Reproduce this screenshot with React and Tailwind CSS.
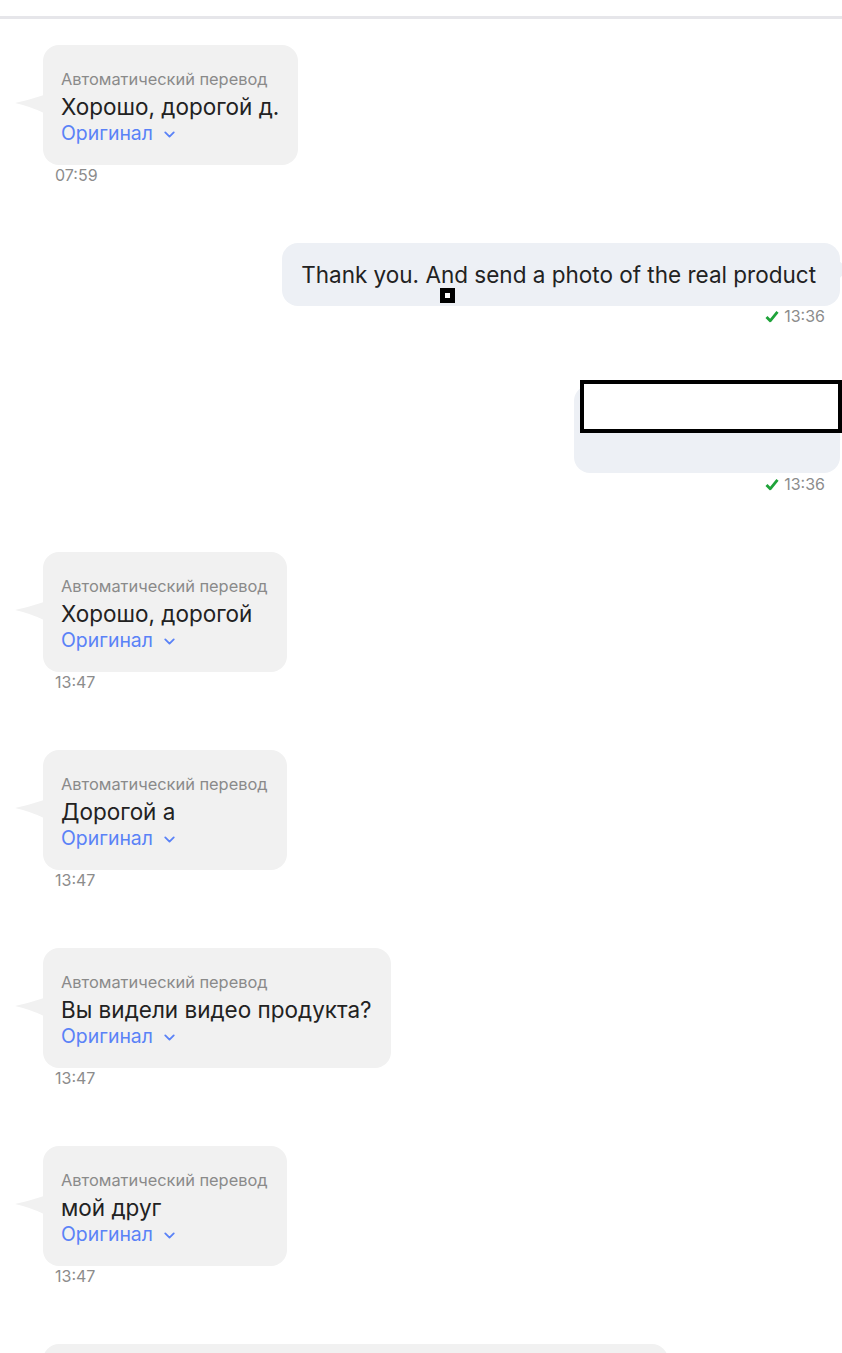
import React from 'react';
import { ChevronDown } from 'lucide-react';

const incoming = [
  { text: 'Хорошо, дорогой д.', time: '07:59' },
];

const laterIncoming = [
  { text: 'Хорошо, дорогой', time: '13:47' },
  { text: 'Дорогой а', time: '13:47' },
  { text: 'Вы видели видео продукта?', time: '13:47' },
  { text: 'мой друг', time: '13:47' },
];

function LeftTail() {
  return (
    <svg className="absolute left-[-28px] top-[50px]" width="29" height="18" viewBox="0 0 29 18">
      <path d="M0 8 Q14 5 29 0 L29 18 Q14 11 0 8 Z" fill="#f1f1f1" />
    </svg>
  );
}

function RightTail() {
  return (
    <svg className="absolute right-[-10px] top-[18px]" width="11" height="18" viewBox="0 0 11 18">
      <path d="M0 0 Q6 5 11 8 Q6 11 0 18 Z" fill="#edf0f5" />
    </svg>
  );
}

function Check() {
  return (
    <svg width="14" height="13" viewBox="0 0 14 13">
      <path d="M1.5 7 L5.2 10.8 L12.5 1.8" fill="none" stroke="#1fa33a" strokeWidth="2.8" strokeLinejoin="round" />
    </svg>
  );
}

function Incoming({ text, time }) {
  return (
    <div className="flex flex-col items-start mb-[58px]">
      <div className="relative ml-[43px] h-[120px] rounded-[16px] bg-[#f1f1f1] pl-[18px] pr-[19px] pt-[24px]">
        <LeftTail />
        <div className="text-[16.4px] leading-[20px] text-[#8a8a8a] whitespace-nowrap">Автоматический перевод</div>
        <div className="mt-1 text-[22.5px] leading-[28px] text-[#222222] whitespace-nowrap">{text}</div>
        <div className="flex items-center gap-[8px] text-[19.4px] leading-[24px] text-[#5a82f7]">
          <span>Оригинал</span>
          <ChevronDown size={17} strokeWidth={2.6} className="mt-[3px]" />
        </div>
      </div>
      <div className="ml-[55px] text-[16px] leading-[20px] text-[#8c8c8c]">{time}</div>
    </div>
  );
}

function OutTime({ time }) {
  return (
    <div className="flex items-center justify-end gap-[5px] pr-[17px] text-[16px] leading-[20px] text-[#8c8c8c]">
      <Check />
      <span>{time}</span>
    </div>
  );
}

export default function App() {
  return (
    <div className="h-[1353px] w-[842px] overflow-hidden bg-white font-['Inter','Liberation_Sans',sans-serif]">
      <div className="mt-[16px] h-[3px] w-full bg-[#e6e6ea]" />
      <div className="mt-[26px] flex flex-col">
        {incoming.map((m, i) => (
          <Incoming key={i} {...m} />
        ))}

        <div className="flex flex-col mb-[59px]">
          <div className="flex justify-end pr-[2px]">
            <div className="relative rounded-[16px] bg-[#edf0f5] pl-[19px] pr-[24px] pt-[18px] pb-[17px] text-[22.5px] leading-[28px] text-[#222222] whitespace-nowrap">
              <RightTail />
              Thank you. And send a photo of the real product
              <div className="absolute left-[158px] top-[45px] flex h-[15px] w-[15px] items-center justify-center bg-black">
                <div className="h-[5px] w-[5px] bg-white" />
              </div>
            </div>
          </div>
          <OutTime time="13:36" />
        </div>

        <div className="flex flex-col mb-[58px]">
          <div className="flex justify-end pr-[2px]">
            <div className="relative h-[88px] w-[266px] rounded-[16px] bg-[#edf0f5]">
              <div className="absolute left-[6px] top-[-5px] h-[53px] w-[262px] border-[4px] border-black bg-white" />
            </div>
          </div>
          <div className="mt-[1px]">
            <OutTime time="13:36" />
          </div>
        </div>

        {laterIncoming.map((m, i) => (
          <Incoming key={i} {...m} />
        ))}

        <div className="relative ml-[43px] h-[120px] w-[625px] rounded-[16px] bg-[#f1f1f1]" />
      </div>
    </div>
  );
}
